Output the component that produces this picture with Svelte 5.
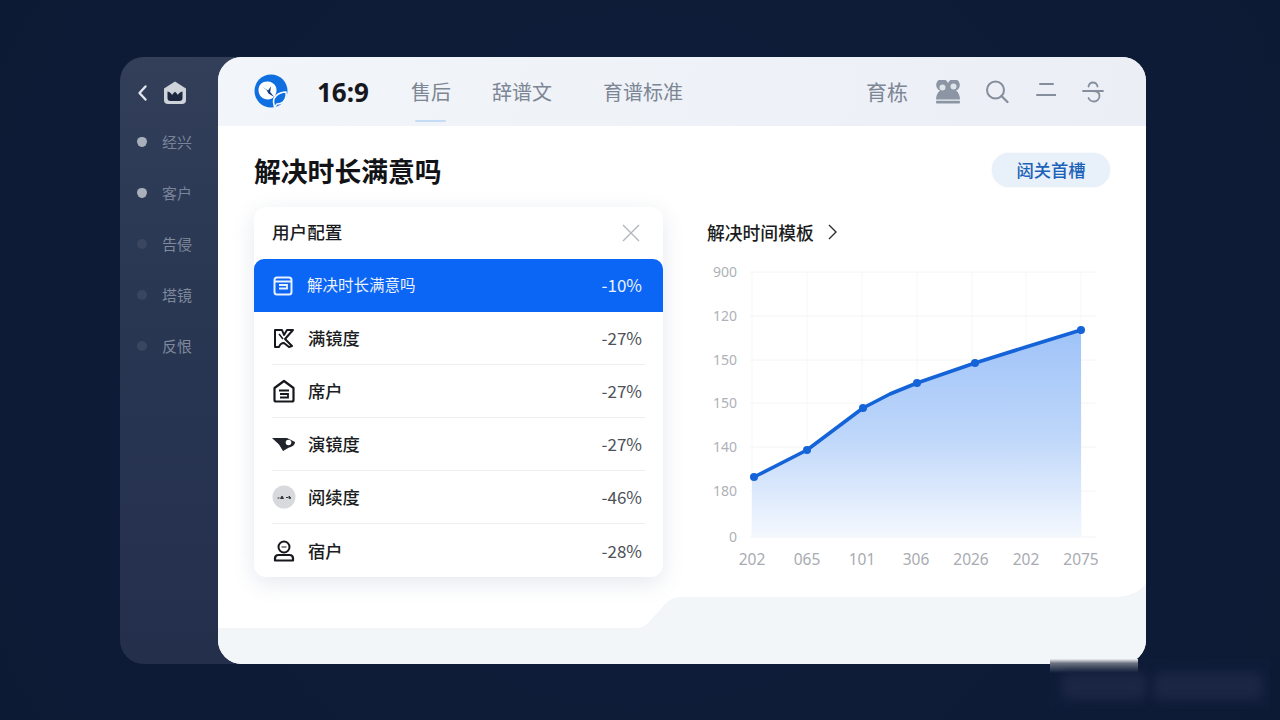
<script>
  const side = [
    { t: '经兴', c: 'a' },
    { t: '客户', c: 'a' },
    { t: '告侵', c: 'b' },
    { t: '塔镜', c: 'b' },
    { t: '反恨', c: 'b' }
  ];
  const rows = [
    { k: 'mirror', t: '满镜度', v: '-27%' },
    { k: 'house', t: '席户', v: '-27%' },
    { k: 'tag', t: '演镜度', v: '-27%' },
    { k: 'dots', t: '阅续度', v: '-46%' },
    { k: 'user', t: '宿户', v: '-28%' }
  ];
  const pts = [[754,477],[807,450],[863,408],[890,394],[917,383],[975,363],[1026,347],[1081,330]];
  const dots = [[754,477],[807,450],[863,408],[917,383],[975,363],[1081,330]];
  const line = pts.map((p) => p.join(',')).join(' ');
  const area = `752,537 752,478 ${line} 1081,537`;
  const yl = [['900',272],['120',316],['150',360],['150',403],['140',447],['180',491],['0',537]];
  const xl = [['202',752],['065',807],['101',862],['306',916],['2026',971],['202',1026],['2075',1081]];
  const vg = [752,807,862,917,972,1026,1081];
</script>

<div class="stage">
  <aside class="side">
    <div class="side-top">
      <svg width="12" height="18" viewBox="0 0 12 18"><path d="M8.500 2.500 2.500 9l6 6.500" fill="none" stroke="#e2e6ec" stroke-width="2.400" stroke-linecap="round" stroke-linejoin="round"/></svg>
      <svg width="24" height="24" viewBox="0 0 24 24"><path d="M12 .5 23 7.500V19a4 4 0 0 1-4 4H5a4 4 0 0 1-4-4V7.500Z" fill="#cfd3da"/><path d="M4.500 10.500c2.500.5 4 2 4.700 3.500.7-1.500 1.500-2.500 2.800-3.300 1.300.8 2.100 1.800 2.800 3.300.7-1.500 2.200-3 4.700-3.500V17a3 3 0 0 1-3 3h-9a3 3 0 0 1-3-3Z" fill="#1c2740"/></svg>
    </div>
    <ul class="side-list">
      {#each side as s}
        <li class={s.c}><i></i><span>{s.t}</span></li>
      {/each}
    </ul>
  </aside>

  <main class="win">
    <svg class="decor" width="928" height="607" viewBox="0 0 928 607"><path d="M0 571H418q7 0 12-5L448 546q6-6 14-6H900q20-2 28-14V607H0Z" fill="#f3f6f9"/></svg>

    <header class="top">
      <svg class="logo" width="36" height="36" viewBox="0 0 36 36">
        <circle cx="17" cy="17" r="16.500" fill="#0f6fe0"/>
        <path d="M4.500 16C4.500 10.500 9 7 14 7.500c5.500.5 9 4.500 8.500 9.500-.5 4.500-3.500 8.500-8.500 8.500-5.500 0-9.500-4-9.500-9.500Z" fill="#fff"/>
        <path d="M8.500 13 14 16.500l3-4-.8 5.500 4 5-5.700-3.500-2-3.500Z" fill="#123f7e"/>
        <path d="M19.500 28c-.2-5 4-9.500 12.500-10 1 6.500-2.500 12-9 12l-2.500 3Z" fill="#0f6fe0" stroke="#fff" stroke-width="1.500" stroke-linejoin="round"/>
      </svg>
      <strong class="ratio">16:9</strong>
      <nav class="tabs">
        <a class="tab on" href="#a">售后</a>
        <a class="tab t2" href="#b">辞谱文</a>
        <a class="tab t3" href="#c">育谱标准</a>
      </nav>
      <div class="tools">
        <span class="tool-text">育栋</span>
        <svg class="i-people" width="26" height="24" viewBox="0 0 26 24"><path d="M1 19.500C1 15 3 12 5 10.500A6 6 0 1 1 13 6.500a6 6 0 1 1 8 4c2.500 1.800 4 5 4 9Z" fill="#8c95a4"/><circle cx="7.500" cy="7.500" r="3" fill="#dfe3ea"/><circle cx="18.500" cy="6.500" r="3" fill="#dfe3ea"/><rect x="1" y="20.800" width="24" height="2.600" rx="1" fill="#8c95a4"/></svg>
        <svg class="i-search" width="24" height="24" viewBox="0 0 24 24"><circle cx="10.500" cy="10" r="8.500" fill="none" stroke="#858e9c" stroke-width="2"/><path d="m16.500 16 6 6" stroke="#858e9c" stroke-width="2.200" stroke-linecap="round"/></svg>
        <svg class="i-lines" width="20" height="16" viewBox="0 0 20 16"><path d="M4 2h13M1 13h19" stroke="#858e9c" stroke-width="2" stroke-linecap="round"/></svg>
        <svg class="i-glyph" width="22" height="24" viewBox="0 0 22 24"><path d="M6.500 6.500C7 4 9 2.500 11 2.500s4 1.500 4.500 4M1 11h20M11 11c5 0 6.500 2.500 6.500 5 0 3-2.500 5.500-5.500 5.500-2.500 0-4.500-1.200-5.500-3.500" fill="none" stroke="#858e9c" stroke-width="1.800" stroke-linecap="round"/></svg>
      </div>
    </header>

    <section class="body">
      <div class="title-row">
        <h1>解决时长满意吗</h1>
        <button class="pill">闼关首槽</button>
      </div>

      <div class="cols">
        <div class="card">
          <div class="card-head">
            <span>用户配置</span>
            <svg width="20" height="20" viewBox="0 0 20 20"><path d="m2 2 16 16M18 2 2 18" stroke="#b3b7bd" stroke-width="1.400"/></svg>
          </div>
          <div class="row-active">
            <svg width="20" height="20" viewBox="0 0 20 20"><rect x="1.500" y="1.500" width="17" height="17" rx="2.500" fill="none" stroke="#eaf2ff" stroke-width="2"/><path d="M1.500 5.500h17M6 9h8v3.500H6" fill="none" stroke="#eaf2ff" stroke-width="1.800"/></svg>
            <span class="lbl">解决时长满意吗</span>
            <span class="val">-10%</span>
          </div>
          {#each rows as r}
            <div class="row">
              <span class="ico">
                {#if r.k === 'mirror'}
                  <svg width="22" height="22" viewBox="0 0 22 22"><path d="M2 20V3h7l2 5 3-5h6l-8 9 7 7-3 1-5-4c-2 0-4 1-5 4Z" fill="none" stroke="#16181d" stroke-width="2" stroke-linejoin="round" stroke-linecap="round"/><path d="M6 7l4 5" stroke="#16181d" stroke-width="1.500"/></svg>
                {:else if r.k === 'house'}
                  <svg width="22" height="24" viewBox="0 0 22 24"><path d="M11 2 20.500 9v12a1.500 1.500 0 0 1-1.500 1.500H3A1.500 1.500 0 0 1 1.500 21V9Z" fill="none" stroke="#16181d" stroke-width="2.200" stroke-linejoin="round"/><path d="M6 11.500h10M7 15h8v3.500H7" fill="none" stroke="#16181d" stroke-width="1.800"/></svg>
                {:else if r.k === 'tag'}
                  <svg width="24" height="16" viewBox="0 0 24 16"><path d="M0 2h15l8 4c0 3-3 5-6 5.500L11 15 7 8.500Z" fill="#202329"/><circle cx="16.500" cy="6.500" r="2.800" fill="#fff"/></svg>
                {:else if r.k === 'dots'}
                  <svg width="24" height="24" viewBox="0 0 24 24"><circle cx="12" cy="12" r="11.500" fill="#d8d9dd"/><path d="M5.500 13h2M10 11l1.500 2.500h-3ZM14 12.500h2M17 11l2 2-2 .5Z" fill="#33363c" stroke="#33363c"/></svg>
                {:else}
                  <svg width="22" height="22" viewBox="0 0 22 22"><circle cx="11" cy="7" r="5.500" fill="none" stroke="#16181d" stroke-width="2"/><path d="M8.500 7h5" stroke="#16181d" stroke-width="1.200"/><path d="M2 20.500v-2c0-2 1.500-3.500 3.500-3.500h11c2 0 3.500 1.500 3.500 3.500v2Z" fill="none" stroke="#16181d" stroke-width="2.200" stroke-linejoin="round"/></svg>
                {/if}
              </span>
              <span class="lbl">{r.t}</span>
              <span class="val">{r.v}</span>
            </div>
          {/each}
        </div>

        <div class="chart">
          <div class="chart-title">
            <span>解决时间模板</span>
            <svg width="12" height="18" viewBox="0 0 12 18"><path d="m2 2 7 7-7 7" fill="none" stroke="#2b2e33" stroke-width="1.400"/></svg>
          </div>
          <svg class="plot" width="410" height="320" viewBox="700 258 410 320">
            <defs>
              <linearGradient id="fill" x1="0" y1="0" x2="0" y2="1">
                <stop offset="0" stop-color="#9fc3f8"/>
                <stop offset="0.5" stop-color="#bdd6fa"/>
                <stop offset="1" stop-color="#f4f8fe"/>
              </linearGradient>
            </defs>
            {#each vg as x}
              <line x1={x} x2={x} y1="272" y2="537" stroke="#f6f7f9"/>
            {/each}
            {#each yl as [label, y]}
              <line x1="750" x2="1096" y1={y} y2={y} stroke="#f3f4f6"/>
              <text class="ax" x="737" y={y + 5} text-anchor="end">{label}</text>
            {/each}
            <polygon points={area} fill="url(#fill)"/>
            <polyline points={line} fill="none" stroke="#1463d8" stroke-width="3.600" stroke-linejoin="round" stroke-linecap="round"/>
            {#each dots as [x, y]}
              <circle cx={x} cy={y} r="4" fill="#1463d8"/>
            {/each}
            {#each xl as [label, x]}
              <text class="ax xt" x={x} y="565" text-anchor="middle">{label}</text>
            {/each}
          </svg>
        </div>
      </div>
    </section>
  </main>

  <div class="mark"><i class="m1"></i><i class="m2"></i></div>
</div>

<style>
  :global(body) { margin: 0; background: #0e1b36; }
  .stage {
    position: relative;
    width: 1280px;
    height: 720px;
    box-sizing: border-box;
    padding: 57px 134px 56px 120px;
    display: flex;
    overflow: hidden;
    background: radial-gradient(circle at 50% 50%, #101e3c, #0d1a34);
    font-family: "Noto Sans CJK SC", "Noto Sans", sans-serif;
  }
  .side {
    width: 122px;
    flex: none;
    box-sizing: border-box;
    border-radius: 24px 0 0 24px;
    background: linear-gradient(180deg, #333f59 0%, #293753 40%, #242f4c 100%);
    padding: 24px 0 0 17px;
  }
  .side-top { display: flex; align-items: center; gap: 14px; height: 24px; }
  .side-list { list-style: none; margin: 11px 0 0; padding: 0; }
  .side-list li {
    display: flex;
    align-items: center;
    height: 51px;
    font-size: 15px;
    color: #7f899c;
  }
  .side-list li span { margin-left: 15px; }
  .side-list li i {
    width: 10px;
    height: 10px;
    border-radius: 50%;
    background: #3a465f;
  }
  .side-list li.a i { background: #a9afbb; border-radius: 50% 50% 50% 50% / 45% 45% 60% 60%; }
  .side-list li.a span { color: #79839a; }

  .win {
    position: relative;
    flex: 1;
    margin-left: -24px;
    border-radius: 24px;
    overflow: hidden;
    background: #fff;
  }
  .decor { position: absolute; left: 0; top: 0; }

  .top {
    position: relative;
    height: 69px;
    display: flex;
    align-items: center;
    box-sizing: border-box;
    padding: 0 42px 0 36px;
    background: linear-gradient(100deg, #f2f5f9, #ebeef5);
  }
  .logo { flex: none; margin-top: 1px; }
  .ratio {
    margin-left: 27px;
    font: 700 26px "Noto Sans", sans-serif;
    color: #16181d;
    line-height: 1;
  }
  .tabs { display: flex; margin-left: 42px; height: 100%; align-items: center; }
  .tab {
    position: relative;
    font-size: 20px;
    line-height: 1;
    color: #7c8694;
    text-decoration: none;
  }
  .t2 { margin-left: 41px; }
  .t3 { margin-left: 51px; }
  .tab.on::after {
    content: "";
    position: absolute;
    left: 4px;
    right: 5px;
    top: 38px;
    height: 2px;
    border-radius: 1px;
    background: #c6dbf4;
  }
  .tools { margin-left: auto; display: flex; align-items: center; }
  .tool-text { font-size: 21px; line-height: 1; color: #7c8694; }
  .i-people { margin-left: 27px; }
  .i-search { margin-left: 24px; }
  .i-lines { margin-left: 27px; margin-top: -3px; }
  .i-glyph { margin-left: 26px; }

  .body { position: relative; padding: 27px 36px 0; }
  .title-row { display: flex; justify-content: space-between; align-items: center; height: 34px; }
  h1 {
    margin: 0;
    font-size: 26.800px;
    font-weight: 700;
    line-height: 1;
    color: #111317;
    position: relative;
    top: 1px;
  }
  .pill {
    width: 118px;
    height: 34px;
    padding: 0 0 2px;
    border: 0;
    border-radius: 17px;
    background: #e8f0f9;
    color: #1c62b8;
    font: 500 17.300px "Noto Sans CJK SC", sans-serif;
    box-shadow: 0 0 2px #e3ebf5;
  }
  .cols { display: flex; margin-top: 20px; }
  .card {
    width: 409px;
    height: 370px;
    flex: none;
    border-radius: 12px;
    background: #fff;
    box-shadow: 0 6px 22px rgba(70, 90, 130, .14);
    overflow: hidden;
  }
  .card-head {
    height: 52px;
    display: flex;
    align-items: center;
    justify-content: space-between;
    padding: 0 22px 0 18px;
    font-size: 17.600px;
    font-weight: 500;
    color: #1a1c21;
  }
  .card-head span { margin-top: -3px; }
  .row-active {
    height: 53px;
    display: flex;
    align-items: center;
    padding: 0 21px 0 19px;
    background: #0b65f5;
    color: #eaf2ff;
    border-radius: 10px 10px 0 0;
  }
  .row-active .lbl { margin: -3px 0 0 14px; font-size: 15.500px; }
  .row-active .val { margin: -2px 0 0 auto; font-size: 17px; }
  .row {
    height: 53px;
    box-sizing: border-box;
    margin: 0 18px;
    display: flex;
    align-items: center;
    border-bottom: 1px solid #eeeff2;
    padding-right: 3px;
    color: #1b1d22;
  }
  .row:last-child { border-bottom: 0; }
  .ico { width: 24px; display: flex; justify-content: center; margin-right: 12px; }
  .row .lbl { font-size: 17.300px; font-weight: 500; margin-top: -1px; }
  .row .val { margin: -1px 0 0 auto; font-size: 17px; color: #4d5158; }

  .chart { margin-left: 37px; flex: 1; }
  .chart-title {
    height: 52px;
    padding-left: 7px;
    display: flex;
    align-items: center;
    font-size: 17.800px;
    font-weight: 500;
    color: #1a1c21;
  }
  .chart-title span { margin-top: -3px; }
  .chart-title svg { margin: -2px 0 0 13px; }
  .plot { display: block; margin-top: -1px; }
  .ax { font: 14px "Noto Sans", sans-serif; fill: #aeb1b7; }
  .xt { font-size: 15.500px; fill: #a8abb1; }

  .mark {
    position: absolute;
    left: 1050px;
    top: 659px;
    width: 220px;
    height: 50px;
    background: #0f1c38;
  }
  .mark::before {
    content: "";
    position: absolute;
    left: 0;
    top: 0;
    width: 88px;
    height: 14px;
    background: linear-gradient(180deg, #eef0f3, #6d7483 30%, #0f1c38);
  }
  .m1, .m2 {
    position: absolute;
    top: 14px;
    height: 26px;
    border-radius: 6px;
    background: #1b2644;
    filter: blur(5px);
  }
  .m1 { left: 12px; width: 84px; }
  .m2 { left: 104px; width: 108px; }
</style>
